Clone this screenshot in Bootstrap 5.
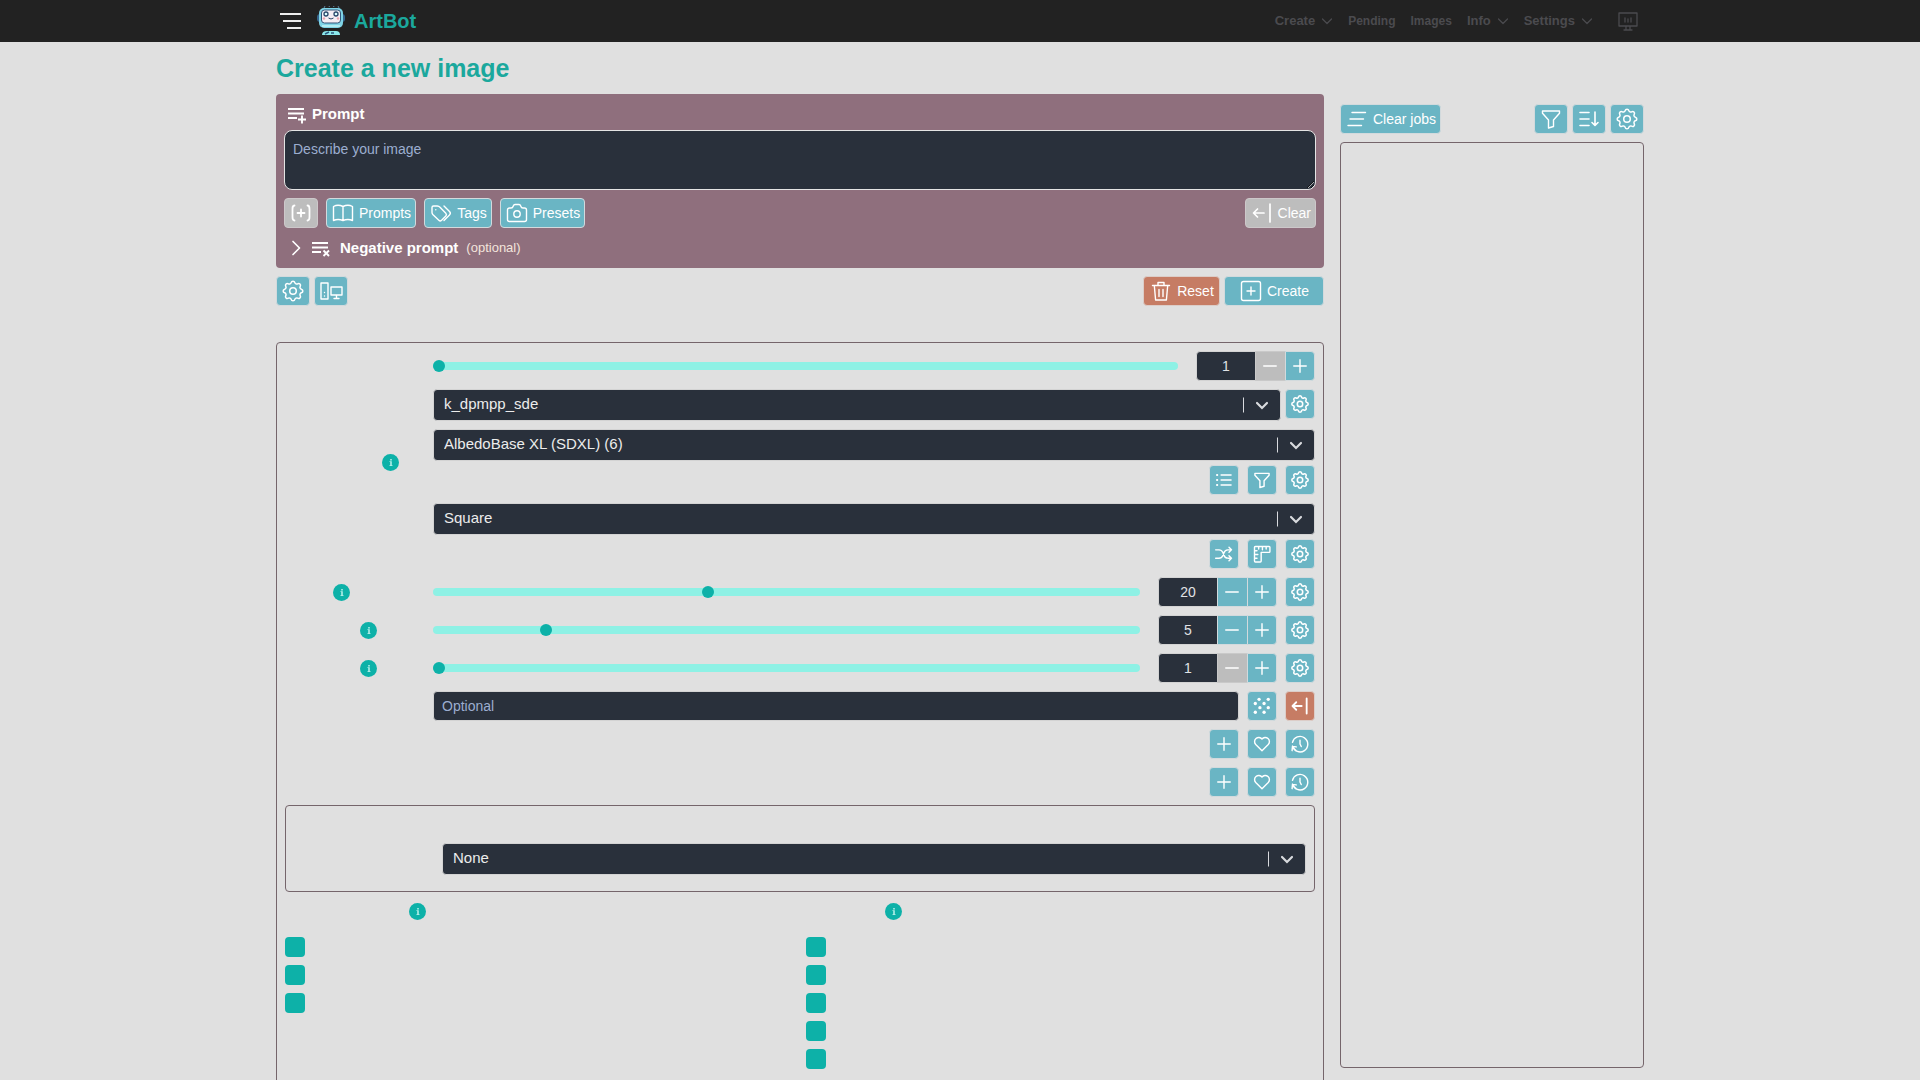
<!DOCTYPE html>
<html lang="en">
<head>
<meta charset="utf-8">
<meta name="viewport" content="width=device-width, initial-scale=1">
<title>ArtBot - Create a new image</title>
<link rel="stylesheet" href="https://cdn.jsdelivr.net/npm/bootstrap@5.3.0/dist/css/bootstrap.min.css">
<style>
  :root { --page: #e0e0e0; --teal: #0db1a8; --title: #1ba89d; --ink: #29303b; --btn: #6ab5c4; --line: #75656b; --off: #bdbdbd; --rust: #c67c64; }
  body { background: var(--page); font-family: "Liberation Sans", Arial, sans-serif; font-size: 14px; line-height: 20px; color: #fff; }
  .app-shell { height: 100vh; overflow: auto; scrollbar-width: none; }
  .app-shell::-webkit-scrollbar { display: none; }
  .page-width { max-width: 1400px; padding: 0 16px; margin: 0 auto; width: 100%; }
  .icon { width: 24px; height: 24px; flex: none; fill: none; stroke: currentColor; stroke-width: 1.4; stroke-linecap: round; stroke-linejoin: round; display: block; }
  .icon-sm { width: 20px; height: 20px; stroke-width: 1.7; }

  .topbar { background: #222; height: 42px; }
  .brand-name { color: var(--title); font-size: 20px; font-weight: 700; }
  .menu-btn { background: none; border: 0; padding: 0; color: #eee; }
  .menu-btn .icon { width: 24px; height: 24px; stroke-width: 2; stroke-linecap: butt; }
  .topnav { gap: 15px; }
  .topnav a { color: #4b4b4f; text-decoration: none; font-weight: 700; font-size: 12px; display: flex; align-items: center; }
  .topnav .drop { font-size: 13px; gap: 6px; }
  .topnav .icon { width: 12px; height: 12px; stroke-width: 1.2; }
  .topnav .screen .icon { width: 24px; height: 24px; stroke-width: 1.3; }

  .page-title { color: var(--title); font-size: 25px; font-weight: 700; line-height: 28px; margin: 0; padding: 12px 0; }
  .prompt-panel { background: #8f6f7d; border-radius: 4px; padding: 8px; }
  .panel-label { font-size: 15px; font-weight: 700; line-height: 24px; }
  .panel-label small { font-size: 13px; font-weight: 400; color: #f3e4dc; }
  .prompt-box { background: var(--ink) !important; border: 1px solid #e4e4e4; border-radius: 8px; color: #eee; font-size: 14px; line-height: 20px; padding: 8px; height: 60px; min-height: 60px; }
  .prompt-box::placeholder, .seed-box::placeholder { color: #9caed0; opacity: 1; }

  .btn-art { --bs-btn-bg: var(--btn); --bs-btn-color: #fff; --bs-btn-border-color: #d2dadd; --bs-btn-hover-bg: #58a5b5; --bs-btn-hover-color: #fff; --bs-btn-disabled-bg: var(--off); --bs-btn-disabled-color: #fff; --bs-btn-disabled-border-color: #cdc8ca; --bs-btn-disabled-opacity: 1;
    display: inline-flex; align-items: center; justify-content: center; gap: 4px; height: 30px; padding: 0 4px; font-size: 14px; line-height: 20px; border-radius: 4px; white-space: nowrap; flex: none; }
  .btn-art.rust { --bs-btn-bg: var(--rust); --bs-btn-border-color: #dccdc8; --bs-btn-hover-bg: #b56c55; }
  .btn-create { min-width: 100px; }
  .btn-reset { min-width: 77px; }

  .outline-box { border: 1px solid var(--line); border-radius: 4px; }
  .settings { margin-top: 36px; padding: 8px 8px 48px; display: flex; flex-direction: column; gap: 8px; }
  .field-name { width: 148px; flex: none; display: flex; align-items: center; }
  .name-s { width: 48px; } .name-m { width: 75px; } .name-l { width: 97px; } .name-xl { width: 124px; } .name-w { width: 79px; }
  .info-dot { width: 17px; height: 17px; border: 0; padding: 0; border-radius: 50%; background: var(--teal); color: #b5f0ea; display: flex; align-items: center; justify-content: center; }
  .info-dot svg { width: 4px; height: 7px; fill: currentColor; }

  .art-select { height: 32px; border: 1px solid #d3d3d3; border-radius: 4px; color: #ececec; font-size: 15px; line-height: 20px; padding: 4px 44px 6px 10px;
    background: var(--ink) url("data:image/svg+xml,%3Csvg xmlns='http://www.w3.org/2000/svg' width='37' height='30' fill='none' stroke='%23d8dade'%3E%3Cpath d='M.5 7.500v15'/%3E%3Cpath d='M14 13l5 5 5-5' stroke-width='2.200' stroke-linecap='round'/%3E%3C/svg%3E") no-repeat right 0 center / 37px 30px; }
  .seed-box, .count-box { height: 30px; background: var(--ink) !important; border: 1px solid #d3d3d3; border-radius: 4px; color: #e0e2e6 !important; font-size: 14px; line-height: 20px; padding: 4px 8px; }
  .range-line { gap: 18px; }
  .counter { width: 119px; flex: none; }
  .counter .count-box { flex: 0 0 60px; text-align: center; padding: 4px; }
  .counter .btn-art { flex: 1 1 0; padding: 0; }
  .counter .btn-art:disabled { border-color: #c9c9c9; }

  .art-range { flex: 1 1 auto; min-width: 0; height: 14px; padding: 0; }
  .art-range::-webkit-slider-runnable-track { height: 8px; background: #8ef1e5; border-radius: 4px; }
  .art-range::-webkit-slider-thumb { width: 12px; height: 12px; margin-top: -2px; background: var(--teal); box-shadow: none; }
  .art-range::-moz-range-track { height: 8px; background: #8ef1e5; border-radius: 4px; }
  .art-range::-moz-range-thumb { width: 12px; height: 12px; background: var(--teal); border: 0; }

  .post-box { padding: 37px 8px 16px; }
  .option-cols { display: grid; grid-template-columns: 1fr 1fr; gap: 12px; }
  .option-head { height: 22px; margin-bottom: 15px; }
  .option-list { display: grid; gap: 8px; }
  .option-list .form-check-input { display: block; width: 20px; height: 20px; margin: 0; border: 0; border-radius: 4px; background-color: var(--teal); }

  .jobs { width: 304px; height: calc(100vh - 42px); padding: 62px 0 12px; flex: none; }
</style>
</head>
<body>
<svg class="d-none" aria-hidden="true">
  <symbol id="gear" viewBox="1 1 22 22"><path d="M10.325 4.317c.426-1.756 2.924-1.756 3.350 0a1.724 1.724 0 0 0 2.573 1.066c1.543-.94 3.310.826 2.370 2.370a1.724 1.724 0 0 0 1.065 2.572c1.756.426 1.756 2.924 0 3.350a1.724 1.724 0 0 0-1.066 2.573c.94 1.543-.826 3.310-2.370 2.370a1.724 1.724 0 0 0-2.572 1.065c-.426 1.756-2.924 1.756-3.350 0a1.724 1.724 0 0 0-2.573-1.066c-1.543.94-3.310-.826-2.370-2.370a1.724 1.724 0 0 0-1.065-2.572c-1.756-.426-1.756-2.924 0-3.350a1.724 1.724 0 0 0 1.066-2.573c-.94-1.543.826-3.310 2.370-2.370 1 .608 2.296.07 2.572-1.065z"/><circle cx="12" cy="12" r="3"/></symbol>
  <symbol id="filter" viewBox="0 0 24 24"><path d="M3.500 4h17v2.200L14.500 13v6.500l-5 1.500v-8L3.500 6.200z"/></symbol>
  <symbol id="plus" viewBox="0 0 24 24"><path d="M12 4.500v15M4.500 12h15"/></symbol>
  <symbol id="minus" viewBox="0 0 24 24"><path d="M4.500 12h15"/></symbol>
  <symbol id="list" viewBox="0 0 24 24"><path d="M8.500 6h12M8.500 12h12M8.500 18h12"/><path d="M3.500 6h.5M3.500 12h.5M3.500 18h.5" stroke-width="2.200"/></symbol>
  <symbol id="shuffle" viewBox="0 0 24 24"><path d="M18 4l3 3-3 3M18 20l3-3-3-3M2 7h4a5 5 0 0 1 4.500 3l1.500 3.500A5 5 0 0 0 16.500 17H21M2 17h4a5 5 0 0 0 4.500-3l1.500-3.500A5 5 0 0 1 16.500 7H21"/></symbol>
  <symbol id="ruler" viewBox="0 0 24 24"><path d="M4 3h16.500a1 1 0 0 1 1 1v5a1 1 0 0 1-1 1H11v10.500a1 1 0 0 1-1 1H4a1 1 0 0 1-1-1V4a1 1 0 0 1 1-1zM3 8h3M3 12.500h4M3 17h3M8 3v3M12.500 3v4M17 3v3"/></symbol>
  <symbol id="heart" viewBox="0 0 24 24"><path d="M19.500 12.600L12 20l-7.500-7.400A5 5 0 1 1 12 6a5 5 0 1 1 7.500 6.600z"/></symbol>
  <symbol id="history" viewBox="0 0 24 24"><path d="M12 7.500V12l1.500 3M3 14.500a9.300 9.300 0 1 0 0-4.500M7.500 15.500L3 14.800l-.5 5.200M4 16a9.300 9.300 0 0 0 3 3.700"/></symbol>
  <symbol id="dice" viewBox="0 0 24 24"><g fill="currentColor" stroke="none"><circle cx="8.500" cy="4" r="2"/><circle cx="19.500" cy="4" r="2"/><circle cx="4" cy="9" r="2"/><circle cx="14.500" cy="9" r="2"/><circle cx="9.500" cy="14" r="2"/><circle cx="19.500" cy="14" r="2"/><circle cx="4" cy="19.500" r="2"/><circle cx="14.500" cy="19.500" r="2"/></g></symbol>
  <symbol id="backbar" viewBox="0 0 24 24"><path d="M14 12H3.500M7.500 7.500L3 12l4.500 4.500M20 3v18" stroke-width="2.200"/></symbol>
  <symbol id="chev" viewBox="0 0 12 12"><path d="M1.500 4l4.500 4.500L10.500 4"/></symbol>
  <symbol id="info" viewBox="0 0 5 9"><rect x="1.500" y="0" width="2" height="2"/><path d="M.5 3h3v5h1v1H.5V8h1V4h-1z"/></symbol>
</svg>

<div class="app-shell">
  <header class="topbar">
    <div class="page-width h-100 d-flex align-items-center">
      <button class="menu-btn ms-1" type="button" aria-label="Menu"><svg class="icon" viewBox="0 0 24 24"><path d="M0 5h21M3 12h18M7 19h14"/></svg></button>
      <a href="#" class="d-flex align-items-center text-decoration-none ms-2" aria-label="ArtBot home">
        <svg class="ms-1 me-2" width="30" height="30" viewBox="0 0 30 30">
          <path d="M8 2l1-2M13 1l.5-1M18 1l-.5-1M23 2l-1-2" stroke="#5f87a3"/>
          <rect x="1" y="8" width="28" height="8" rx="3" fill="#35648c"/>
          <rect x="3" y="2" width="24" height="20" rx="5" fill="#7fd4e6"/>
          <rect x="5.500" y="4" width="19" height="13" rx="3" fill="#f4eef4" stroke="#34577a"/>
          <circle cx="10" cy="8" r="2" fill="#dff" stroke="#29466a" stroke-width="1.300"/><circle cx="20" cy="8" r="2" fill="#dff" stroke="#29466a" stroke-width="1.300"/>
          <path d="M12.500 12q2.500 2 5 0" fill="none" stroke="#29466a"/><circle cx="8" cy="12.500" r="1.200" fill="#e9a5b0"/><circle cx="22" cy="12.500" r="1.200" fill="#e9a5b0"/>
          <path d="M6 20h18" stroke="#c4f5f4" stroke-width="1.500"/>
          <path d="M6 29q0-4 5-4h9q4 0 4 4z" fill="#8ce8ea"/><path d="M9 28l4-2M15 27h3" stroke="#2c5b80" stroke-width="1.500"/>
        </svg>
        <span class="brand-name">ArtBot</span>
      </a>
      <nav class="topnav ms-auto d-flex align-items-center">
        <a class="drop" href="#">Create <svg class="icon"><use href="#chev"/></svg></a>
        <a href="#">Pending</a>
        <a href="#">Images</a>
        <a class="drop" href="#">Info <svg class="icon"><use href="#chev"/></svg></a>
        <a class="drop" href="#">Settings <svg class="icon"><use href="#chev"/></svg></a>
        <a class="screen ms-2 me-1" href="#" aria-label="Workers"><svg class="icon" viewBox="0 0 24 24"><path d="M3 4h18v13H3zM8 21h8M10 17v4M14 17v4M9 9v4M12 10v3M15 9v4"/></svg></a>
      </nav>
    </div>
  </header>

  <div class="page-width d-flex gap-3">
    <main class="flex-grow-1" style="min-width:0">
      <h1 class="page-title">Create a new image</h1>

      <section class="prompt-panel">
        <label class="panel-label d-flex align-items-center gap-1 mb-1" for="prompt">
          <svg class="icon" viewBox="0 0 24 24"><path d="M4 7h16M4 11.500h16M4 16h9M18 13.500v8M14 17.500h8" stroke-width="1.900" stroke-linecap="butt"/></svg>Prompt
        </label>
        <textarea id="prompt" class="form-control prompt-box" placeholder="Describe your image"></textarea>
        <div class="d-flex gap-2 mt-2">
          <button class="btn btn-art" type="button" disabled aria-label="Insert"><svg class="icon" viewBox="0 0 24 24"><path d="M5.500 4.500C3.500 4.500 3.500 6 3.500 8v8c0 2 0 3.500 2 3.500M18.500 4.500c2 0 2 1.500 2 3.500v8c0 2 0 3.500-2 3.500M12 8.500v7M8.500 12h7" stroke-width="1.800"/></svg></button>
          <button class="btn btn-art" type="button"><svg class="icon" viewBox="0 0 24 24"><path d="M2.500 5.500Q7 3 12 5.500 17 3 21.500 5.500V19.500Q17 17.500 12 19.500 7 17.500 2.500 19.500zM12 5.500v14"/></svg>Prompts</button>
          <button class="btn btn-art" type="button"><svg class="icon" viewBox="0 0 24 24"><path d="M3 6.500v5a3 3 0 0 0 .8 2l6 5.700a2 2 0 0 0 2.800 0l4.200-4.200a2 2 0 0 0 0-2.800L11 6.200A4 4 0 0 0 8.300 5H4.500A1.500 1.500 0 0 0 3 6.500zM6.800 8.800h.01M15 19.500l5.500-5.500a2.500 2.500 0 0 0 0-3.500L15 5"/></svg>Tags</button>
          <button class="btn btn-art" type="button"><svg class="icon" viewBox="0 0 24 24"><path d="M4.500 7h1.500c1.500 0 2-1 2.300-2S9 3.500 10 3.500h4c1 0 1.400.5 1.700 1.500S16.500 7 18 7h1.500a2 2 0 0 1 2 2v9.500a2 2 0 0 1-2 2h-15a2 2 0 0 1-2-2V9a2 2 0 0 1 2-2z"/><circle cx="12" cy="13" r="3.200"/></svg>Presets</button>
          <button class="btn btn-art ms-auto" type="button" disabled><svg class="icon" viewBox="0 0 24 24"><path d="M14 12H4M7.500 8L3.500 12l4 4M20 3v18" stroke-width="1.700"/></svg>Clear</button>
        </div>
        <div class="panel-label d-flex align-items-center mt-2">
          <svg class="icon" viewBox="0 0 24 24"><path d="M9 5.500l6.500 6.500L9 18.500" stroke-width="1.700"/></svg>
          <svg class="icon me-2" viewBox="0 0 24 24"><path d="M4 7h16M4 11.500h16M4 16h9M15.500 14.500l5.500 5.500M21 14.500l-5.500 5.500" stroke-width="1.900" stroke-linecap="butt"/></svg>
          <span>Negative prompt</span><small class="ms-2">(optional)</small>
        </div>
      </section>

      <div class="d-flex gap-1 mt-2">
        <button class="btn btn-art" type="button" aria-label="Preferences"><svg class="icon"><use href="#gear"/></svg></button>
        <button class="btn btn-art" type="button" aria-label="Workers"><svg class="icon" viewBox="0 0 24 24"><path d="M2 4h7v16H2zM5.500 17h.01M5.500 13.500h.01M12 8h11v8H12zM17.500 16v3.500M15 19.500h5"/></svg></button>
        <button class="btn btn-art rust btn-reset ms-auto" type="button"><svg class="icon" viewBox="0 0 24 24"><path d="M3.500 6.500h17M5.300 6.500L6.600 21h10.800l1.300-14.500M9 6.500V3.500h6v3M10 10.500v7M14 10.500v7"/></svg>Reset</button>
        <button class="btn btn-art btn-create" type="button"><svg class="icon" viewBox="0 0 24 24"><rect x="2.500" y="2.500" width="19" height="19" rx="2"/><path d="M12 8v8M8 12h8"/></svg>Create</button>
      </div>

      <section class="outline-box settings">
        <div class="d-flex align-items-center">
          <div class="field-name"></div>
          <div class="range-line d-flex align-items-center flex-grow-1">
            <input class="form-range art-range" type="range" min="1" max="20" value="1" aria-label="Number of images">
            <div class="input-group counter flex-nowrap"><input class="form-control count-box" type="text" value="1" aria-label="Image count"><button class="btn btn-art" type="button" disabled aria-label="Less"><svg class="icon icon-sm"><use href="#minus"/></svg></button><button class="btn btn-art" type="button" aria-label="More"><svg class="icon icon-sm"><use href="#plus"/></svg></button></div>
          </div>
        </div>

        <div class="d-flex">
          <div class="field-name"></div>
          <div class="d-flex flex-grow-1 gap-1">
            <select class="form-select art-select" aria-label="Sampler"><option>k_dpmpp_sde</option></select>
            <button class="btn btn-art" type="button" aria-label="Sampler settings"><svg class="icon icon-sm"><use href="#gear"/></svg></button>
          </div>
        </div>

        <div class="d-flex">
          <div class="field-name"><span class="name-l"></span><button class="info-dot" type="button" aria-label="About models"><svg><use href="#info"/></svg></button></div>
          <div class="flex-grow-1">
            <select class="form-select art-select" aria-label="Image model"><option>AlbedoBase XL (SDXL) (6)</option></select>
            <div class="d-flex justify-content-end gap-2 mt-1">
              <button class="btn btn-art" type="button" aria-label="Model list"><svg class="icon icon-sm"><use href="#list"/></svg></button>
              <button class="btn btn-art" type="button" aria-label="Filter models"><svg class="icon icon-sm"><use href="#filter"/></svg></button>
              <button class="btn btn-art" type="button" aria-label="Model settings"><svg class="icon icon-sm"><use href="#gear"/></svg></button>
            </div>
          </div>
        </div>

        <div class="d-flex">
          <div class="field-name"></div>
          <div class="flex-grow-1">
            <select class="form-select art-select" aria-label="Image orientation"><option>Square</option></select>
            <div class="d-flex justify-content-end gap-2 mt-1">
              <button class="btn btn-art" type="button" aria-label="Swap sides"><svg class="icon icon-sm"><use href="#shuffle"/></svg></button>
              <button class="btn btn-art" type="button" aria-label="Dimensions"><svg class="icon icon-sm"><use href="#ruler"/></svg></button>
              <button class="btn btn-art" type="button" aria-label="Size settings"><svg class="icon icon-sm"><use href="#gear"/></svg></button>
            </div>
          </div>
        </div>

        <div class="d-flex align-items-center">
          <div class="field-name"><span class="name-s"></span><button class="info-dot" type="button" aria-label="About steps"><svg><use href="#info"/></svg></button></div>
          <div class="range-line d-flex align-items-center flex-grow-1">
            <input class="form-range art-range" type="range" min="1" max="50" value="20" aria-label="Steps">
            <div class="d-flex gap-2">
              <div class="input-group counter flex-nowrap"><input class="form-control count-box" type="text" value="20" aria-label="Steps value"><button class="btn btn-art" type="button" aria-label="Less"><svg class="icon icon-sm"><use href="#minus"/></svg></button><button class="btn btn-art" type="button" aria-label="More"><svg class="icon icon-sm"><use href="#plus"/></svg></button></div>
              <button class="btn btn-art" type="button" aria-label="Steps settings"><svg class="icon icon-sm"><use href="#gear"/></svg></button>
            </div>
          </div>
        </div>

        <div class="d-flex align-items-center">
          <div class="field-name"><span class="name-m"></span><button class="info-dot" type="button" aria-label="About guidance"><svg><use href="#info"/></svg></button></div>
          <div class="range-line d-flex align-items-center flex-grow-1">
            <input class="form-range art-range" type="range" min="1" max="27" value="5" aria-label="Guidance">
            <div class="d-flex gap-2">
              <div class="input-group counter flex-nowrap"><input class="form-control count-box" type="text" value="5" aria-label="Guidance value"><button class="btn btn-art" type="button" aria-label="Less"><svg class="icon icon-sm"><use href="#minus"/></svg></button><button class="btn btn-art" type="button" aria-label="More"><svg class="icon icon-sm"><use href="#plus"/></svg></button></div>
              <button class="btn btn-art" type="button" aria-label="Guidance settings"><svg class="icon icon-sm"><use href="#gear"/></svg></button>
            </div>
          </div>
        </div>

        <div class="d-flex align-items-center">
          <div class="field-name"><span class="name-m"></span><button class="info-dot" type="button" aria-label="About CLIP skip"><svg><use href="#info"/></svg></button></div>
          <div class="range-line d-flex align-items-center flex-grow-1">
            <input class="form-range art-range" type="range" min="1" max="12" value="1" aria-label="CLIP skip">
            <div class="d-flex gap-2">
              <div class="input-group counter flex-nowrap"><input class="form-control count-box" type="text" value="1" aria-label="CLIP skip value"><button class="btn btn-art" type="button" disabled aria-label="Less"><svg class="icon icon-sm"><use href="#minus"/></svg></button><button class="btn btn-art" type="button" aria-label="More"><svg class="icon icon-sm"><use href="#plus"/></svg></button></div>
              <button class="btn btn-art" type="button" aria-label="CLIP skip settings"><svg class="icon icon-sm"><use href="#gear"/></svg></button>
            </div>
          </div>
        </div>

        <div class="d-flex">
          <div class="field-name"></div>
          <div class="d-flex flex-grow-1 gap-2">
            <input class="form-control seed-box" type="text" placeholder="Optional" aria-label="Seed">
            <button class="btn btn-art" type="button" aria-label="Random seed"><svg class="icon icon-sm"><use href="#dice"/></svg></button>
            <button class="btn btn-art rust" type="button" aria-label="Clear seed"><svg class="icon icon-sm"><use href="#backbar"/></svg></button>
          </div>
        </div>

        <div class="d-flex justify-content-end gap-2">
          <button class="btn btn-art" type="button" aria-label="Add LoRA"><svg class="icon icon-sm"><use href="#plus"/></svg></button>
          <button class="btn btn-art" type="button" aria-label="Favorite LoRAs"><svg class="icon icon-sm"><use href="#heart"/></svg></button>
          <button class="btn btn-art" type="button" aria-label="Recent LoRAs"><svg class="icon icon-sm"><use href="#history"/></svg></button>
        </div>
        <div class="d-flex justify-content-end gap-2">
          <button class="btn btn-art" type="button" aria-label="Add embedding"><svg class="icon icon-sm"><use href="#plus"/></svg></button>
          <button class="btn btn-art" type="button" aria-label="Favorite embeddings"><svg class="icon icon-sm"><use href="#heart"/></svg></button>
          <button class="btn btn-art" type="button" aria-label="Recent embeddings"><svg class="icon icon-sm"><use href="#history"/></svg></button>
        </div>

        <div class="outline-box post-box d-flex">
          <div class="field-name"></div>
          <select class="form-select art-select" aria-label="Upscaler"><option>None</option></select>
        </div>

        <div class="option-cols">
          <div>
            <div class="option-head d-flex align-items-center"><span class="name-xl"></span><button class="info-dot" type="button" aria-label="About face correction"><svg><use href="#info"/></svg></button></div>
            <div class="option-list">
              <input class="form-check-input" type="checkbox" aria-label="Option A1">
              <input class="form-check-input" type="checkbox" aria-label="Option A2">
              <input class="form-check-input" type="checkbox" aria-label="Option A3">
            </div>
          </div>
          <div>
            <div class="option-head d-flex align-items-center"><span class="name-w"></span><button class="info-dot" type="button" aria-label="About options"><svg><use href="#info"/></svg></button></div>
            <div class="option-list">
              <input class="form-check-input" type="checkbox" aria-label="Option B1">
              <input class="form-check-input" type="checkbox" aria-label="Option B2">
              <input class="form-check-input" type="checkbox" aria-label="Option B3">
              <input class="form-check-input" type="checkbox" aria-label="Option B4">
              <input class="form-check-input" type="checkbox" aria-label="Option B5">
            </div>
          </div>
        </div>
      </section>
    </main>

    <aside class="jobs d-flex flex-column gap-2">
      <div class="d-flex gap-1">
        <button class="btn btn-art me-auto" type="button"><svg class="icon" viewBox="0 0 24 24"><path d="M7 5.500h13.500M5 12h13.500M3 18.500h13.500"/></svg>Clear jobs</button>
        <button class="btn btn-art" type="button" aria-label="Filter jobs"><svg class="icon"><use href="#filter"/></svg></button>
        <button class="btn btn-art" type="button" aria-label="Sort jobs"><svg class="icon" viewBox="0 0 24 24"><path d="M3 5.500h9M3 12h9M3 18.500h9M18 5v13M15 15.500l3 3 3-3" stroke-width="1.600"/></svg></button>
        <button class="btn btn-art" type="button" aria-label="Job settings"><svg class="icon"><use href="#gear"/></svg></button>
      </div>
      <div class="outline-box flex-grow-1"></div>
    </aside>
  </div>
</div>
<script src="https://cdn.jsdelivr.net/npm/bootstrap@5.3.0/dist/js/bootstrap.bundle.min.js"></script>
</body>
</html>
